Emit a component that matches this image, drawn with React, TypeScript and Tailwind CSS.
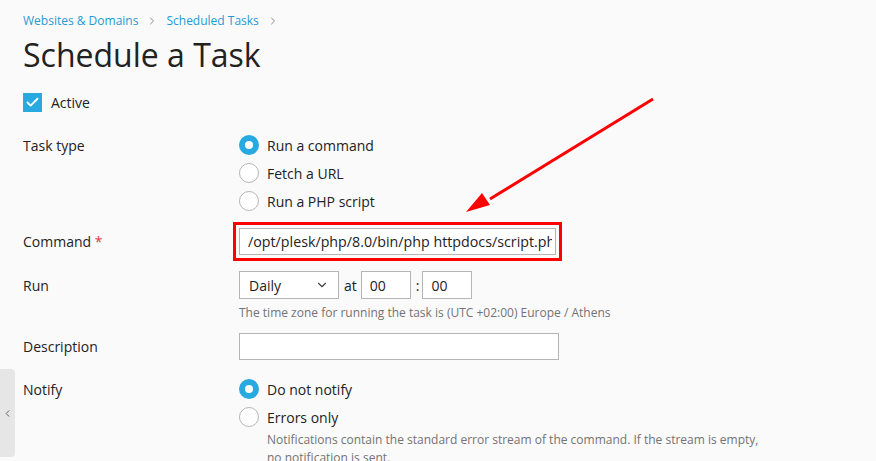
import { ChevronRight, ChevronDown, ChevronLeft, Check } from "lucide-react";

const Radio = ({ checked, label }: { checked?: boolean; label: string }) => (
   <label className="flex items-center gap-2 h-7">
      {checked ? (
         <span className="w-5 h-5 rounded-full bg-[#28a9e0] flex items-center justify-center">
            <span className="w-2 h-2 rounded-full bg-white" />
         </span>
      ) : (
         <span className="w-5 h-5 rounded-full border border-[#b5b5b5] bg-white" />
      )}
      <span>{label}</span>
   </label>
);

const Row = ({ label, children, className = "" }: { label: React.ReactNode; children: React.ReactNode; className?: string }) => (
   <div className={`flex ${className}`}>
      <div className="w-[216px] shrink-0">{label}</div>
      <div className="flex-1">{children}</div>
   </div>
);

const App = () => {
   return (
      <div className="relative w-[876px] h-[461px] overflow-hidden bg-[#fafafa] text-[#222] text-[14px] font-['Open_Sans',sans-serif]">
         <div className="px-[23px] pt-[12px]">
            <nav className="flex items-center text-[12px] text-[#1f9ad6] gap-[6px]">
               <span>Websites &amp; Domains</span>
               <ChevronRight size={12} className="text-[#8a8a8a] mx-[2px]" />
               <span>Scheduled Tasks</span>
               <ChevronRight size={12} className="text-[#8a8a8a] mx-[2px]" />
            </nav>
            <h1 className="text-[32px] leading-[44px] mt-[3px] text-[#222]">Schedule a Task</h1>
            <div className="flex items-center gap-[9px] mt-[15px]">
               <span className="w-[19px] h-[19px] bg-[#28a9e0] flex items-center justify-center">
                  <Check size={15} strokeWidth={3} className="text-white" />
               </span>
               <span>Active</span>
            </div>

            <Row label={<div className="h-7 flex items-center">Task type</div>} className="mt-[18px]">
               <Radio checked label="Run a command" />
               <Radio label="Fetch a URL" />
               <Radio label="Run a PHP script" />
            </Row>

            <Row
               className="mt-[7px] items-center"
               label={
                  <div>
                     Command <span className="text-[#e0383e]">*</span>
                  </div>
               }
            >
               <div className="ml-[-6px] w-[329px] border-[3px] border-[#ff0000] p-[3px]">
                  <div className="h-[27px] bg-white border border-[#b5b5b5] pl-[8px] pr-[3px] flex items-center">
                     <div className="whitespace-nowrap overflow-hidden text-[14.25px]">
                        /opt/plesk/php/8.0/bin/php httpdocs/script.php
                     </div>
                  </div>
               </div>
            </Row>

            <Row className="mt-[10px]" label={<div className="h-[28px] flex items-center">Run</div>}>
               <div className="flex items-center">
                  <div className="w-[100px] h-[28px] bg-white border border-[#b5b5b5] px-[9px] flex items-center justify-between">
                     <span>Daily</span>
                     <ChevronDown size={14} className="text-[#444]" />
                  </div>
                  <span className="ml-[5px] mr-[4px]">at</span>
                  <div className="w-[50px] h-[28px] bg-white border border-[#b5b5b5] px-[8px] flex items-center">00</div>
                  <span className="ml-[5px] mr-[3px]">:</span>
                  <div className="w-[50px] h-[28px] bg-white border border-[#b5b5b5] px-[8px] flex items-center">00</div>
               </div>
               <div className="text-[12px] text-[#737373] mt-[5px]">
                  The time zone for running the task is (UTC +02:00) Europe / Athens
               </div>
            </Row>

            <Row className="mt-[11px] items-center" label="Description">
               <div className="w-[320px] h-[27px] bg-white border border-[#b5b5b5]" />
            </Row>

            <Row className="mt-[15px]" label={<div className="h-7 flex items-center">Notify</div>}>
               <Radio checked label="Do not notify" />
               <Radio label="Errors only" />
               <p className="ml-[28px] text-[12px] leading-[18px] text-[#737373] w-[500px]">
                  Notifications contain the standard error stream of the command. If the stream is empty,
                  no notification is sent.
               </p>
            </Row>
         </div>

         <div className="absolute left-0 top-[369px] w-[15px] h-[88px] bg-[#e6e6e6] rounded-r-[4px] flex items-center justify-center">
            <ChevronLeft size={11} className="text-[#555]" />
         </div>

         <svg className="absolute left-0 top-0 pointer-events-none" width="876" height="461">
            <line x1="653" y1="99" x2="490" y2="199" stroke="#ff0000" strokeWidth="3" />
            <polygon points="466,212 482,193 490,205" fill="#ff0000" />
         </svg>
      </div>
   );
};

export default App;
